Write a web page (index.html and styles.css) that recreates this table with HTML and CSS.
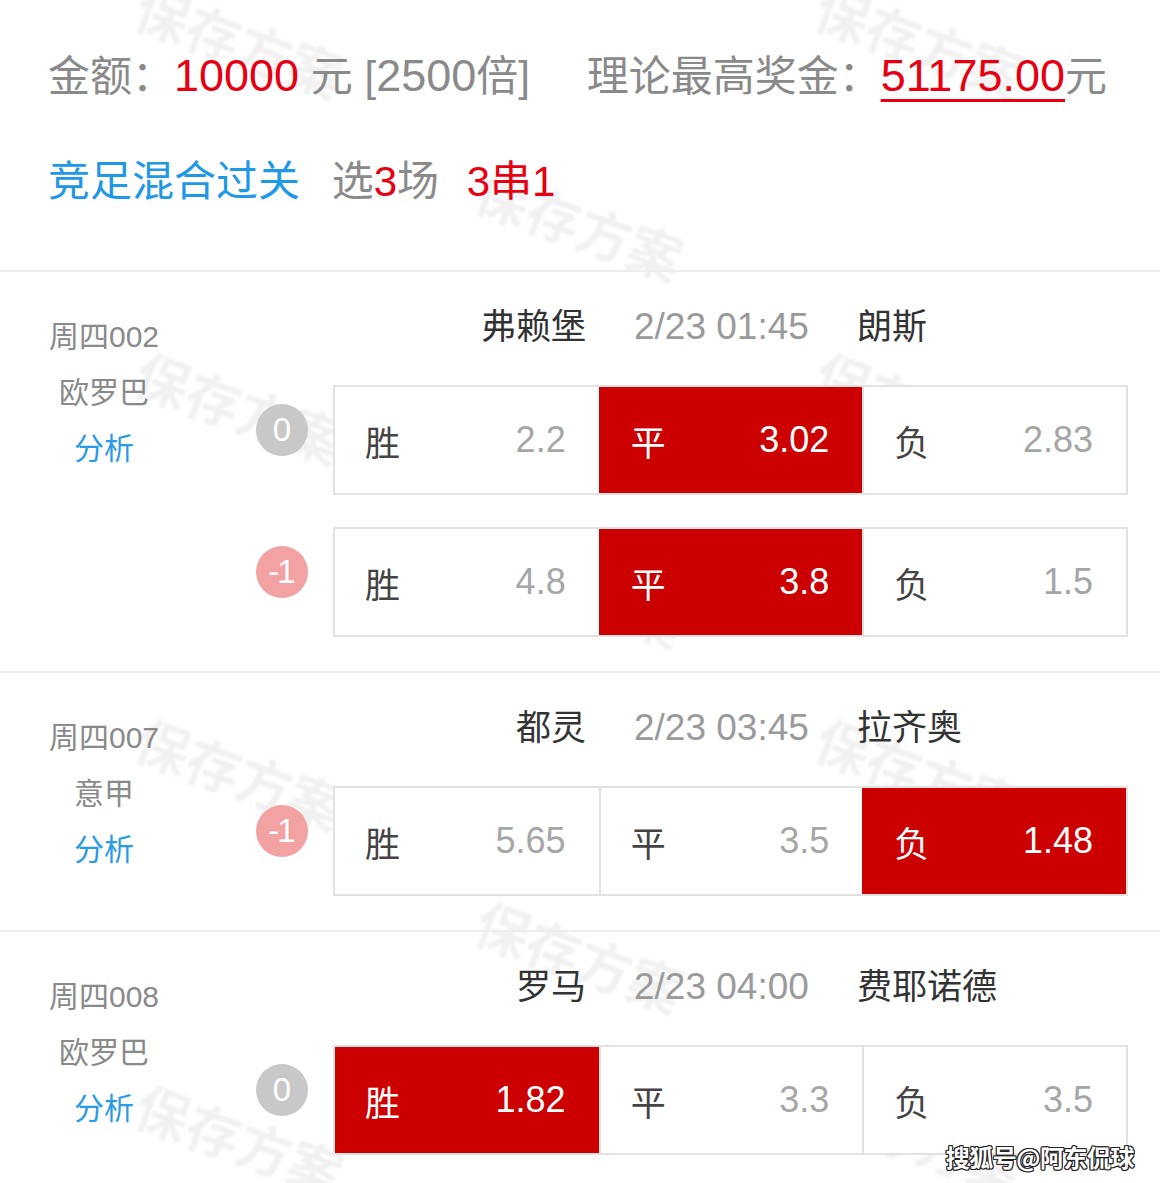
FILE: index.html
```html
<!DOCTYPE html>
<html lang="zh-CN">
<head>
<meta charset="utf-8">
<title>方案</title>
<link rel="stylesheet" href="styles.css">
</head>
<body>
<div class="page">
  <div class="watermarks" aria-hidden="true">
    <span class="wm">保存方案</span><span></span><span class="wm">保存方案</span>
    <span></span><span class="wm">保存方案</span><span></span>
    <span class="wm">保存方案</span><span></span><span class="wm">保存方案</span>
    <span></span><span class="wm">保存方案</span><span></span>
    <span class="wm">保存方案</span><span></span><span class="wm">保存方案</span>
    <span></span><span class="wm">保存方案</span><span></span>
    <span class="wm">保存方案</span><span></span><span class="wm">保存方案</span>
  </div>

  <div class="content">
    <header class="summary">
      <div class="line1">
        <span class="gray">金额：</span><span class="red num">10000</span><span class="gray"> 元 [<span class="num">2500</span>倍]</span>
        <span class="gray prize-label">理论最高奖金：</span><span class="red num underline">51175.00</span><span class="gray">元</span>
      </div>
      <div class="line2">
        <span class="blue">竞足混合过关</span>
        <span class="gray pick">选<span class="red">3</span>场</span>
        <span class="red pick2">3串1</span>
      </div>
    </header>

    <section class="match">
      <div class="info">
        <div class="code">周四002</div>
        <div class="league">欧罗巴</div>
        <div class="analyze">分析</div>
      </div>
      <div class="main">
        <div class="teams">
          <span class="home">弗赖堡</span>
          <span class="time">2/23 01:45</span>
          <span class="away">朗斯</span>
        </div>
        <div class="bet">
          <div class="badge-wrap"><span class="badge zero">0</span></div>
          <div class="box">
            <div class="cell"><span class="lbl">胜</span><span class="val">2.2</span></div>
            <div class="cell sel"><span class="lbl">平</span><span class="val">3.02</span></div>
            <div class="cell"><span class="lbl">负</span><span class="val">2.83</span></div>
          </div>
        </div>
        <div class="bet">
          <div class="badge-wrap"><span class="badge minus">-1</span></div>
          <div class="box">
            <div class="cell"><span class="lbl">胜</span><span class="val">4.8</span></div>
            <div class="cell sel"><span class="lbl">平</span><span class="val">3.8</span></div>
            <div class="cell"><span class="lbl">负</span><span class="val">1.5</span></div>
          </div>
        </div>
      </div>
    </section>

    <section class="match">
      <div class="info">
        <div class="code">周四007</div>
        <div class="league">意甲</div>
        <div class="analyze">分析</div>
      </div>
      <div class="main">
        <div class="teams">
          <span class="home">都灵</span>
          <span class="time">2/23 03:45</span>
          <span class="away">拉齐奥</span>
        </div>
        <div class="bet">
          <div class="badge-wrap"><span class="badge minus">-1</span></div>
          <div class="box">
            <div class="cell"><span class="lbl">胜</span><span class="val">5.65</span></div>
            <div class="cell"><span class="lbl">平</span><span class="val">3.5</span></div>
            <div class="cell sel"><span class="lbl">负</span><span class="val">1.48</span></div>
          </div>
        </div>
      </div>
    </section>

    <section class="match">
      <div class="info">
        <div class="code">周四008</div>
        <div class="league">欧罗巴</div>
        <div class="analyze">分析</div>
      </div>
      <div class="main">
        <div class="teams">
          <span class="home">罗马</span>
          <span class="time">2/23 04:00</span>
          <span class="away">费耶诺德</span>
        </div>
        <div class="bet">
          <div class="badge-wrap"><span class="badge zero">0</span></div>
          <div class="box">
            <div class="cell sel"><span class="lbl">胜</span><span class="val">1.82</span></div>
            <div class="cell"><span class="lbl">平</span><span class="val">3.3</span></div>
            <div class="cell"><span class="lbl">负</span><span class="val">3.5</span></div>
          </div>
        </div>
      </div>
    </section>
  </div>

  <div class="logo">搜狐号@阿东侃球</div>
</div>
</body>
</html>
```

FILE: styles.css
```css
* { box-sizing: border-box; }
html, body { margin: 0; padding: 0; background: #fff; }
body {
  font-family: "Liberation Sans", "Noto Sans CJK SC", sans-serif;
  color: #333;
}
.page {
  position: relative;
  width: 1160px;
  height: 1183px;
  overflow: hidden;
  background: #fff;
}

/* watermark layer */
.watermarks {
  position: absolute;
  top: -51px;
  left: 70px;
  display: grid;
  grid-template-columns: repeat(3, 340px);
  grid-auto-rows: 183px;
  z-index: 0;
}
.watermarks span {
  align-self: center;
  justify-self: center;
}
.wm {
  font-family: "Noto Sans CJK SC", sans-serif;
  font-size: 54px;
  font-weight: 700;
  color: rgba(0, 0, 0, 0.055);
  white-space: nowrap;
  transform: rotate(20deg);
  filter: blur(1.2px);
}

.content {
  position: relative;
  z-index: 1;
}

/* summary */
.summary {
  padding: 46px 0 58px 48px;
  font-size: 42px;
}
.line1, .line2 {
  line-height: 60px;
  white-space: nowrap;
}
.line2 { margin-top: 45px; }
.num { font-size: 45px; }
.gray { color: #8a8a8a; }
.red { color: #e60012; }
.blue { color: #1f98e6; }
.prize-label { margin-left: 45px; }
.underline {
  text-decoration: underline;
  text-decoration-thickness: 3px;
  text-underline-offset: 8px;
}
.pick { margin-left: 20px; }
.pick2 { margin-left: 16px; }

/* match sections */
.match {
  display: grid;
  grid-template-columns: 112px 1fr;
  padding: 30px 32px 34px 48px;
  border-top: 2px solid #ededed;
}
.info {
  margin-top: 7px;
  text-align: center;
  font-size: 30px;
  line-height: 56px;
  color: #8a8a8a;
}
.analyze { color: #2a9be6; }

.teams {
  margin-left: 173px;
  display: grid;
  grid-template-columns: 253px auto 1fr;
  column-gap: 48px;
  font-size: 35px;
  line-height: 50px;
  margin-bottom: 33px;
  white-space: nowrap;
}
.home { text-align: right; color: #333; }
.time { color: #9a9a9a; font-size: 37px; }
.away { color: #333; }

.bet {
  display: flex;
  align-items: center;
}
.bet + .bet { margin-top: 32px; }
.badge-wrap {
  width: 173px;
  flex: none;
  display: flex;
  justify-content: flex-end;
  padding-right: 25px;
  margin-bottom: 21px;
}
.badge {
  width: 52px;
  height: 52px;
  border-radius: 50%;
  display: flex;
  align-items: center;
  justify-content: center;
  color: #fff;
  font-size: 33px;
}
.badge.zero { background: #c8c8c8; }
.badge.minus { background: #f2a2a2; letter-spacing: -2px; padding-right: 2px; }

.box {
  flex: 1;
  height: 110px;
  display: grid;
  grid-template-columns: 1fr 1fr 1fr;
  border: 2px solid #e2e2e2;
  background: #fff;
}
.cell {
  display: flex;
  align-items: center;
  justify-content: space-between;
  padding: 0 33px 0 30px;
  background: #fff;
}
.cell + .cell { border-left: 2px solid #e2e2e2; }
.lbl { font-size: 35px; color: #444; }
.val { font-size: 36px; color: #a6a6a6; }
.cell.sel { background: #cc0000; border-color: #cc0000; }
.cell.sel .lbl, .cell.sel .val { color: #fff; }

/* logo overlay */
.logo {
  position: absolute;
  right: 26px;
  bottom: 9px;
  z-index: 2;
  font-family: "Noto Sans CJK SC", sans-serif;
  font-size: 24px;
  font-weight: 700;
  color: #fff;
  letter-spacing: -0.5px;
  text-shadow:
    1px 0 0 #222, -1px 0 0 #222, 0 1px 0 #222, 0 -1px 0 #222,
    1px 1px 0 #222, -1px -1px 0 #222, 1px -1px 0 #222, -1px 1px 0 #222;
}
```
